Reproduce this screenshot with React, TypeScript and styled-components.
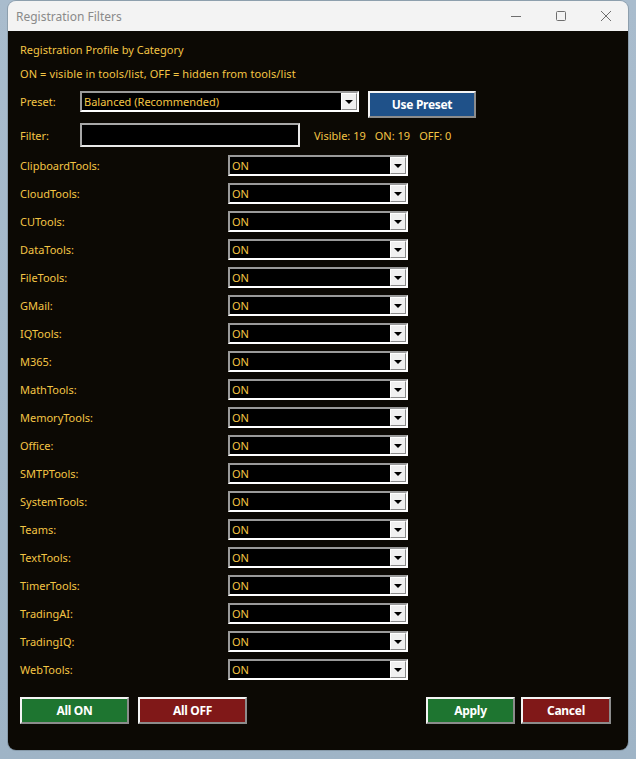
import React, { useState } from "react";
import styled, { createGlobalStyle } from "styled-components";

const GlobalStyle = createGlobalStyle`
    html, body {
        margin: 0;
        padding: 0;
    }
    body {
        background: linear-gradient(180deg, #a9bccd 0%, #9fb4c6 100%);
        height: 759px;
        overflow: hidden;
        font-family: "Noto Sans", "Open Sans", sans-serif;
    }
`;

const gold = "#f4c545";

const Window = styled.div`
    margin: 1px 0 0 8px;
    width: 620px;
    height: 749px;
    border-radius: 8px;
    overflow: hidden;
    display: flex;
    flex-direction: column;
    box-shadow: 0 0 0 1px rgba(60, 70, 80, 0.25);
`;

const TitleBar = styled.div`
    height: 30px;
    background: #f3f3f3;
    display: flex;
    align-items: center;
    padding-left: 8px;
    flex-shrink: 0;

    .title {
        flex: 1;
        font-size: 12px;
        color: #8a8a8a;
    }
`;

const TitleButton = styled.div`
    width: 45px;
    height: 30px;
    display: flex;
    align-items: center;
    justify-content: center;
    color: #6e6e6e;
`;

const Body = styled.div`
    flex: 1;
    background: #0c0904;
    padding: 11px 12px 0 12px;
    color: ${gold};
    font-size: 11px;
`;

const Line = styled.div<{ $gap?: number; $spacing?: number }>`
    height: 16px;
    line-height: 16px;
    margin-bottom: ${(p) => p.$gap ?? 0}px;
    letter-spacing: ${(p) => p.$spacing ?? 0}px;
    white-space: nowrap;
`;

const Row = styled.div<{ $height: number; $gap: number; $align?: string }>`
    display: flex;
    align-items: ${(p) => p.$align ?? "center"};
    height: ${(p) => p.$height}px;
    margin-bottom: ${(p) => p.$gap}px;
`;

const Label = styled.div<{ $width: number; $lineHeight?: number }>`
    width: ${(p) => p.$width}px;
    line-height: ${(p) => (p.$lineHeight ? `${p.$lineHeight}px` : "normal")};
    flex-shrink: 0;
    white-space: nowrap;
`;

const Combo = styled.div<{ $width: number }>`
    width: ${(p) => p.$width}px;
    height: 21px;
    box-sizing: border-box;
    border-style: solid;
    border-width: 2px;
    border-color: #9a9a9a #ffffff #ffffff #9a9a9a;
    background: #000;
    display: flex;
    align-items: stretch;
    flex-shrink: 0;

    .value {
        flex: 1;
        padding-left: 2px;
        line-height: 17px;
        color: ${gold};
        white-space: nowrap;
        overflow: hidden;
    }
`;

const ComboArrow = styled.div`
    width: 16px;
    box-sizing: border-box;
    background: #f0f0f0;
    border-style: solid;
    border-width: 1px;
    border-color: #ffffff #8a8a8a #8a8a8a #ffffff;
    display: flex;
    align-items: center;
    justify-content: center;

    &::after {
        content: "";
        border-left: 4px solid transparent;
        border-right: 4px solid transparent;
        border-top: 4px solid #000;
    }
`;

const TextBox = styled.div`
    width: 220px;
    height: 24px;
    box-sizing: border-box;
    border: 2px solid #e8e8e8;
    border-top-color: #a8a8a8;
    border-left-color: #a8a8a8;
    background: #000;
    flex-shrink: 0;
`;

const Counts = styled.div`
    margin-left: 14px;
    white-space: nowrap;

    span + span {
        margin-left: 9px;
    }
`;

const Button = styled.button<{ $bg: string; $width: number }>`
    width: ${(p) => p.$width}px;
    height: 27px;
    box-sizing: border-box;
    background: ${(p) => p.$bg};
    color: #ffffff;
    font-family: "Noto Sans", "Open Sans", sans-serif;
    font-weight: 700;
    font-size: 12px;
    letter-spacing: -0.3px;
    border-style: solid;
    border-width: 2px;
    border-color: #f4f4f4 #8c8c8c #8c8c8c #f4f4f4;
    padding: 0;
    cursor: pointer;
`;

const List = styled.div`
    display: flex;
    flex-direction: column;
    gap: 7px;
    margin-bottom: 17px;
`;

const Footer = styled.div`
    display: flex;
    align-items: center;

    .spacer {
        flex: 1;
    }
`;

const categories = [
    "ClipboardTools",
    "CloudTools",
    "CUTools",
    "DataTools",
    "FileTools",
    "GMail",
    "IQTools",
    "M365",
    "MathTools",
    "MemoryTools",
    "Office",
    "SMTPTools",
    "SystemTools",
    "Teams",
    "TextTools",
    "TimerTools",
    "TradingAI",
    "TradingIQ",
    "WebTools",
];

const green = "#1e7530";
const red = "#801818";

function App() {
    const [states] = useState<Record<string, boolean>>(() =>
        Object.fromEntries(categories.map((c) => [c, true]))
    );
    const on = categories.filter((c) => states[c]).length;

    return (
        <>
            <GlobalStyle />
            <Window>
                <TitleBar>
                    <div className="title">Registration Filters</div>
                    <TitleButton>
                        <svg width="10" height="10" viewBox="0 0 10 10">
                            <path d="M0 5.5h10" stroke="currentColor" strokeWidth="1" />
                        </svg>
                    </TitleButton>
                    <TitleButton>
                        <svg width="10" height="10" viewBox="0 0 10 10">
                            <rect x="0.5" y="0.5" width="9" height="9" rx="1" fill="none" stroke="currentColor" strokeWidth="1" />
                        </svg>
                    </TitleButton>
                    <TitleButton>
                        <svg width="10" height="10" viewBox="0 0 10 10">
                            <path d="M0 0L10 10M10 0L0 10" stroke="currentColor" strokeWidth="1" />
                        </svg>
                    </TitleButton>
                </TitleBar>

                <Body>
                    <Line $gap={8}>Registration Profile by Category</Line>
                    <Line $gap={9} $spacing={0.1}>
                        ON = visible in tools/list, OFF = hidden from tools/list
                    </Line>

                    <Row $height={27} $gap={5} $align="flex-start">
                        <Label $width={60} $lineHeight={21}>Preset:</Label>
                        <Combo $width={279}>
                            <div className="value">Balanced (Recommended)</div>
                            <ComboArrow />
                        </Combo>
                        <Button $bg="#1f5189" $width={108} style={{ marginLeft: 9 }}>
                            Use Preset
                        </Button>
                    </Row>

                    <Row $height={24} $gap={8}>
                        <Label $width={60}>Filter:</Label>
                        <TextBox />
                        <Counts>
                            <span>Visible: {categories.length}</span>
                            <span>ON: {on}</span>
                            <span>OFF: {categories.length - on}</span>
                        </Counts>
                    </Row>

                    <List>
                        {categories.map((cat) => (
                            <Row key={cat} $height={21} $gap={0}>
                                <Label $width={208}>{cat}:</Label>
                                <Combo $width={180}>
                                    <div className="value">{states[cat] ? "ON" : "OFF"}</div>
                                    <ComboArrow />
                                </Combo>
                            </Row>
                        ))}
                    </List>

                    <Footer>
                        <Button $bg={green} $width={109}>All ON</Button>
                        <Button $bg={red} $width={109} style={{ marginLeft: 9 }}>All OFF</Button>
                        <div className="spacer" />
                        <Button $bg={green} $width={89}>Apply</Button>
                        <Button $bg={red} $width={90} style={{ marginLeft: 6, marginRight: 5 }}>Cancel</Button>
                    </Footer>
                </Body>
            </Window>
        </>
    );
}

export default App;
